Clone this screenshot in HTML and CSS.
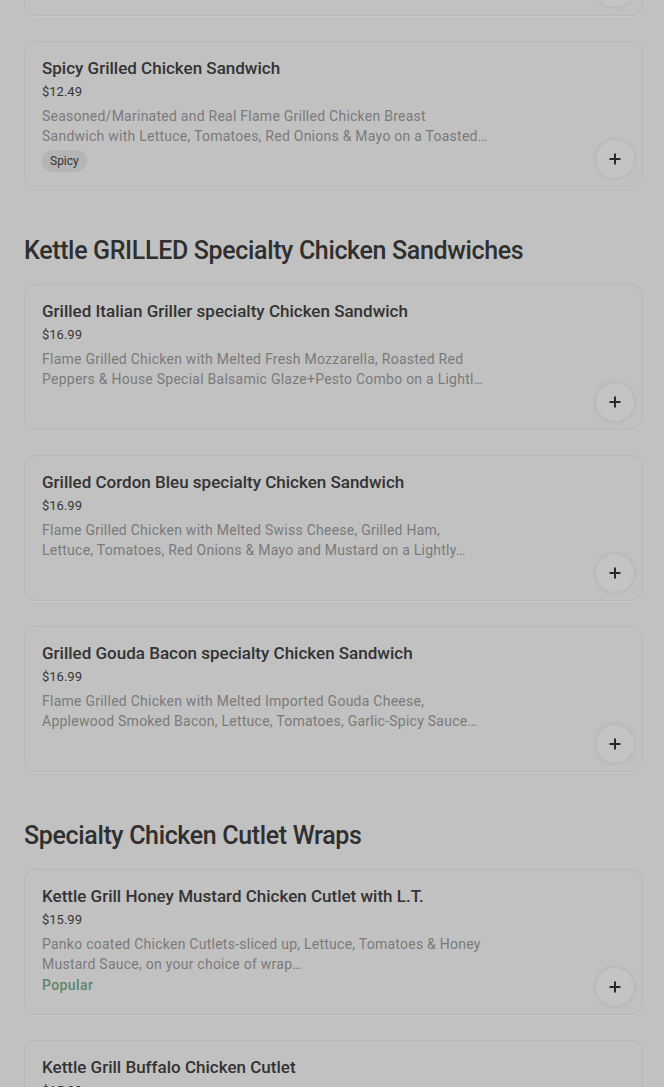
FILE: index.html
```html
<!DOCTYPE html>
<html lang="en">
<head>
    <meta charset="UTF-8">
    <meta name="viewport" content="width=device-width, initial-scale=1.0">
    <title>Menu</title>
    <link rel="stylesheet" href="styles.css">
</head>
<body>
    <div class="menu">
        <!-- tail of previous card, scrolled off -->
        <div class="item">
            <button class="add" aria-label="Add"><svg viewBox="0 0 12 12"><path d="M6 0.5v11M0.5 6h11"/></svg></button>
        </div>

        <div class="item">
            <div class="info">
                <h3>Spicy Grilled Chicken Sandwich</h3>
                <div class="price">$12.49</div>
                <p class="desc">Seasoned/Marinated and Real Flame Grilled Chicken Breast Sandwich with Lettuce, Tomatoes, Red Onions &amp; Mayo on a Toasted…</p>
                <span class="tag">Spicy</span>
            </div>
            <button class="add" aria-label="Add"><svg viewBox="0 0 12 12"><path d="M6 0.5v11M0.5 6h11"/></svg></button>
        </div>

        <h2 class="section-title">Kettle GRILLED Specialty Chicken Sandwiches</h2>

        <div class="item">
            <div class="info">
                <h3>Grilled Italian Griller specialty Chicken Sandwich</h3>
                <div class="price">$16.99</div>
                <p class="desc">Flame Grilled Chicken with Melted Fresh Mozzarella, Roasted Red Peppers &amp; House Special Balsamic Glaze+Pesto Combo on a Lightl…</p>
            </div>
            <button class="add" aria-label="Add"><svg viewBox="0 0 12 12"><path d="M6 0.5v11M0.5 6h11"/></svg></button>
        </div>

        <div class="item">
            <div class="info">
                <h3>Grilled Cordon Bleu specialty Chicken Sandwich</h3>
                <div class="price">$16.99</div>
                <p class="desc">Flame Grilled Chicken with Melted Swiss Cheese, Grilled Ham, Lettuce, Tomatoes, Red Onions &amp; Mayo and Mustard on a Lightly…</p>
            </div>
            <button class="add" aria-label="Add"><svg viewBox="0 0 12 12"><path d="M6 0.5v11M0.5 6h11"/></svg></button>
        </div>

        <div class="item">
            <div class="info">
                <h3>Grilled Gouda Bacon specialty Chicken Sandwich</h3>
                <div class="price">$16.99</div>
                <p class="desc">Flame Grilled Chicken with Melted Imported Gouda Cheese, Applewood Smoked Bacon, Lettuce, Tomatoes, Garlic-Spicy Sauce…</p>
            </div>
            <button class="add" aria-label="Add"><svg viewBox="0 0 12 12"><path d="M6 0.5v11M0.5 6h11"/></svg></button>
        </div>

        <h2 class="section-title">Specialty Chicken Cutlet Wraps</h2>

        <div class="item">
            <div class="info">
                <h3>Kettle Grill Honey Mustard Chicken Cutlet with L.T.</h3>
                <div class="price">$15.99</div>
                <p class="desc">Panko coated Chicken Cutlets-sliced up, Lettuce, Tomatoes &amp; Honey Mustard Sauce, on your choice of wrap…</p>
                <span class="popular">Popular</span>
            </div>
            <button class="add" aria-label="Add"><svg viewBox="0 0 12 12"><path d="M6 0.5v11M0.5 6h11"/></svg></button>
        </div>

        <div class="item">
            <div class="info">
                <h3>Kettle Grill Buffalo Chicken Cutlet</h3>
                <div class="price">$15.99</div>
            </div>
        </div>
    </div>
</body>
</html>
```

FILE: styles.css
```css
body {
    margin: 0;
    background: #c1c1c1;
    font-family: Roboto, "Liberation Sans", sans-serif;
    color: #2e2e2e;
    height: 1087px;
    overflow: hidden;
}

.menu {
    display: flex;
    flex-direction: column;
    gap: 25px;
    padding: 0 21px 0 24px;
    margin-top: -130px;
}

/* Menu item cards */
.item {
    position: relative;
    display: flex;
    min-height: 144px;
    padding: 0 16px;
    border: 1px solid #b7b7b7;
    border-radius: 12px;
    box-shadow: 0 1px 0 #c9c9c9;
}

.info {
    width: 446px;
    padding: 15px 0 12px 1px;
}

.info h3 {
    margin: 0;
    font-size: 17px;
    font-weight: 500;
    line-height: 22px;
    color: #333;
}

.price {
    margin-top: 3px;
    font-size: 13px;
    line-height: 20px;
    color: #383838;
}

.desc {
    margin: 4px 0 0;
    font-size: 14px;
    letter-spacing: 0.25px;
    line-height: 20px;
    color: #7a7a7a;
}

.tag {
    display: inline-block;
    margin-top: 4px;
    padding: 2px 8px;
    border-radius: 12px;
    background: #b5b5b5;
    font-size: 12px;
    line-height: 18px;
    color: #333;
}

.popular {
    display: block;
    margin-top: 1px;
    font-size: 14px;
    font-weight: 500;
    letter-spacing: 0.4px;
    line-height: 20px;
    color: #5b8769;
}

/* Add button, pinned to the card corner */
.add {
    position: absolute;
    right: 8px;
    bottom: 8px;
    display: flex;
    align-items: center;
    justify-content: center;
    width: 38px;
    height: 38px;
    padding: 0;
    border: none;
    border-radius: 50%;
    background: #c4c4c4;
    box-shadow: 0 0 5px rgba(0, 0, 0, 0.1);
}

.add svg {
    width: 12px;
    height: 12px;
    stroke: #2a2a2a;
    stroke-width: 2;
    fill: none;
}

.section-title {
    margin: 31px 0 0;
    font-size: 25px;
    font-weight: 500;
    letter-spacing: -0.35px;
    line-height: 16px;
    color: #2f2f2f;
}
```
